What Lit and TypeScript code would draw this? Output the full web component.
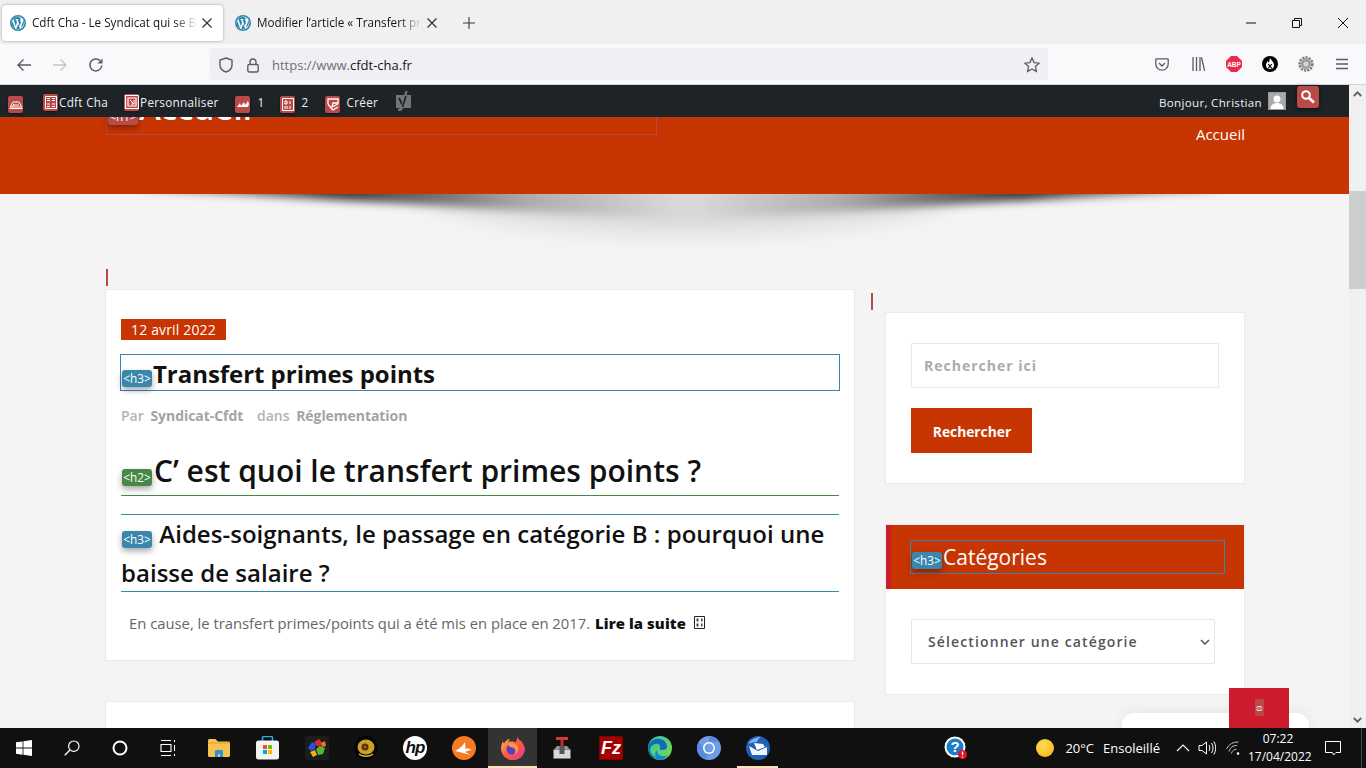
import { LitElement, html, css, svg } from "lit";
import { customElement } from "lit/decorators.js";

const wp = (size = 16) => html`<svg class="fav" width=${size} height=${size} viewBox="0 0 16 16">
  <circle cx="8" cy="8" r="8" fill="#2f86ad"/>
  <circle cx="8" cy="8" r="6.4" fill="#fff"/>
  <path d="M8 1.7a6.3 6.3 0 0 0-5.3 2.9h.9l2.1 6.6 1.3-3.9-.9-2.6h-.7v-.6h3v.6h-.7l2.1 6.5.9-3c.3-1 .2-1.8-.2-2.5-.4-.6-.6-1.4.1-1.9.2-.1.4-.2.5-.2A6.3 6.3 0 0 0 8 1.7zM2.1 5.5a6.3 6.3 0 0 0 3.1 8.1zM8.1 8.7l-1.8 5.2a6.3 6.3 0 0 0 3.8-.1zM13.1 4.6c.1 1.3-.2 2.2-.5 3.2l-1.8 5.3a6.3 6.3 0 0 0 2.3-8.5z" fill="#2f86ad"/>
</svg>`;

const ic = (w: number, h: number, body: unknown, extra = "") => html`<svg class="ic ${extra}" width=${w} height=${h} viewBox="0 0 ${w} ${h}" fill="none">${body}</svg>`;

const adminGlyphs: Record<string, unknown> = {
  car: svg`<path d="M2 11l3-5h6l3 5zM1.500 12.500h13M5 9h6M4 11l2-3" stroke="#fff" stroke-width="1"/>`,
  grid: svg`<path d="M2.500 2.500h11v12h-11zM4 4.500h3M9 4.500h3M4 6.500h3M9 6.500h3M4 10h3M9 10h3M4 12.500h3M9 12.500h3" stroke="#fff"/>`,
  frame: svg`<path d="M1.500 1.500h13v13h-13zM4 4h8v8H4z" stroke="#fff" stroke-width="1.200"/><path d="M6 6l4 4M10 6v4H7" stroke="#fff"/>`,
  wave: svg`<path d="M2 11l3-4 1 3 3-4 1 3 3-4 1 3-1 3H3z" fill="#fff"/>`,
  box: svg`<path d="M2.500 2.500h11v12h-11zM5 5h2v3H5zM10 5v3M5 10v3M7 10v3M10 10v3" stroke="#fff"/>`,
  plus: svg`<path d="M3 8V3h10v4H8l-1 4 6-3M3 8l3 4 2 2 5-3" stroke="#fff" stroke-width="1.300"/>`,
};
const adm = (k: string, low = true) => html`<span class="aic ${low ? "low" : ""}"><svg width="16" height="17" viewBox="0 0 16 17" fill="none">${adminGlyphs[k]}</svg></span>`;

const chevron = "data:image/svg+xml," + encodeURIComponent(`<svg xmlns="http://www.w3.org/2000/svg" width="10" height="6" viewBox="0 0 10 6"><path d="M1 1l4 4 4-4" fill="none" stroke="#555" stroke-width="1.500"/></svg>`);

@customElement("app-root")
export class AppRoot extends LitElement {
  static styles = css`
    :host { display: flex; flex-direction: column; width: 1366px; height: 768px; overflow: hidden; position: relative; font-family: "Open Sans", sans-serif; background: #f4f4f4; }
    svg { display: block; flex: none; }

    .tabbar { height: 44px; flex: none; background: #f0f0f0; display: flex; align-items: center; font-size: 11.7px; color: #15141a; padding-top: 1px; box-sizing: border-box; }
    .tab { height: 36px; width: 221px; box-sizing: border-box; display: flex; align-items: center; padding: 0 10px 0 8px; border-radius: 4px; flex: none; }
    .tab.on { margin-left: 2px; background: #fff; box-shadow: 0 0 3px rgba(0,0,0,.35); }
    .tab.off { margin-left: 4px; }
    .tab .t { margin: 0 0 2px 6px; flex: 1; white-space: nowrap; overflow: hidden; -webkit-mask-image: linear-gradient(to right, #000 86%, transparent 100%); mask-image: linear-gradient(to right, #000 86%, transparent 100%); }
    .tab .x { margin-left: 4px; }
    .newtab { margin-left: 15px; }
    .winbtns { margin-left: auto; display: flex; }
    .winbtns span { width: 46px; display: flex; justify-content: center; }

    .toolbar { height: 41px; flex: none; background: #f9f9fb; border-bottom: 1px solid #d4d4d6; box-sizing: border-box; display: flex; align-items: center; padding-left: 16px; position: relative; }
    .nav { width: 36px; display: flex; margin-top: 2px; }
    .url { position: absolute; left: 210px; width: 838px; height: 32px; top: 4px; background: #f0f0f4; border-radius: 4px; display: flex; align-items: center; box-sizing: border-box; padding: 2px 0 0 9px; font-size: 13px; color: #15141a; }
    .url .g { color: #6f6e75; }
    .url .s { margin-left: 14px; }
    .url .u { margin-left: 13px; }
    .url .st { margin-left: auto; margin-right: 8px; }
    .tools { margin-left: auto; display: flex; align-items: center; padding-right: 18px; }
    .tools > * { margin-left: 20px; }

    .wpbar { height: 32px; flex: none; background: #1d2327; color: #f0f0f1; font-size: 11.7px; letter-spacing: .3px; display: flex; align-items: center; position: relative; z-index: 3; margin-right: 17px; padding: 2px 0 0 8px; box-sizing: border-box; }
    .aic { width: 15px; height: 17px; background: #b94a48; border-radius: 2px; display: inline-block; flex: none; box-shadow: 0 1px 3px rgba(0,0,0,.4); overflow: hidden; }
    .aic.low { margin-top: 5px; }
    .ai { display: flex; align-items: center; }
    .ai span.l { line-height: 17px; }
    .yoast { margin: -3px 0 0 15px; }
    .bon { margin-left: auto; display: flex; align-items: center; margin-right: 63px; font-size: 11.6px; }
    .avatar { margin: -2px 0 0 6px; width: 18px; height: 18px; background: #aaa; border: 1px solid #9a9a9a; box-sizing: border-box; overflow: hidden; }
    .srch { position: absolute; left: 1297px; top: 1px; width: 22px; height: 22px; border-radius: 3px; background: #b94a48; box-shadow: 0 1px 4px rgba(0,0,0,.5); display: flex; align-items: center; justify-content: center; }

    .view { flex: 1; min-height: 0; display: flex; position: relative; }
    .page { flex: 1; min-width: 0; overflow: hidden; background: #f4f4f4; }
    .hdr { height: 77px; background: #c73502; display: flex; color: #fff; position: relative; box-sizing: border-box; padding: 0 104px 0 106px; justify-content: space-between; }
    .h1box { margin-top: -30px; width: 551px; height: 48px; box-sizing: border-box; border: 1px solid #b5484a; display: flex; align-items: flex-start; padding: 0 0 0 1px; font-size: 33px; line-height: 39px; font-weight: 600; white-space: nowrap; }
    .h1box .tag { margin-top: 20px; background: #b94a48; position: relative; z-index: 1; }
    .h1box b { font-weight: 600; margin-left: 1px; }
    .menu { font-size: 15px; line-height: 20px; margin-top: 7px; }
    .shadow { display: block; }

    .tag { display: inline-block; width: 30px; height: 17px; line-height: 17px; text-align: center; background: #3a87ad; color: #fff; font-size: 11.8px; font-weight: 400; border-radius: 3px; box-shadow: 0 3px 6px rgba(0,0,0,.35); font-family: "Open Sans", sans-serif; flex: none; vertical-align: middle; white-space: nowrap; }
    .tag.g { background: #468847; }

    .cols { display: grid; grid-template-columns: 750px 360px; column-gap: 30px; padding-left: 105px; }
    .tick { width: 2px; height: 17px; background: #b94a48; }
    .tick.a { margin: 0 0 3px 1px; }
    .side { padding-top: 24px; }
    .tick.b { margin: 0 0 2px -14px; }
    .card { background: #fff; border: 1px solid #eaeaea; box-sizing: border-box; }
    .art { height: 372px; padding: 29px 15px 0; }
    .art + .art { margin-top: 40px; height: 200px; }
    .date { display: inline-block; background: #c73502; color: #fff; height: 21px; width: 105px; font-size: 14px; line-height: 21px; text-align: center; letter-spacing: .15px; vertical-align: top; }
    .datew { height: 21px; }
    .title { margin: 14px -1px 0; height: 37px; border: 1px solid #3a87ad; box-sizing: border-box; display: flex; align-items: center; padding: 2px 0 0 1px; font-size: 24px; font-weight: 700; color: #111; line-height: 33px; white-space: nowrap; }
    .title .tag { margin: 10px 1px 0 0; }
    .title .tt { letter-spacing: -.04px; }
    .meta { margin-top: 15px; font-size: 14px; line-height: 20px; color: #b3b3b3; font-weight: 600; white-space: nowrap; padding-left: 0; }
    .meta b { color: #a3a3a3; font-weight: 700; margin-left: 3px; letter-spacing: -.05px; }
    .meta .d { margin-left: 10px; }
    .h2 { margin-top: 21px; height: 49px; border-bottom: 1px solid #468847; box-sizing: border-box; font-size: 30px; line-height: 46px; font-weight: 600; color: #111; display: flex; white-space: nowrap; padding-top: 1px; align-items: flex-start; }
    .h2 .tag { margin-top: 21px; margin-right: 2px; margin-left: 1px; }
    .h3 { margin-top: 18px; height: 78px; border-top: 1px solid #3a87ad; border-bottom: 1px solid #3a87ad; box-sizing: border-box; font-size: 24px; line-height: 39px; font-weight: 600; color: #111; letter-spacing: .03px; }
    .h3 .in { margin-top: -1px; }
    .h3 .tag { margin: -1px 1px 0 1px; position: relative; top: 3px; letter-spacing: 0; }
    .ex { margin: 21px 0 0 8px; font-size: 14.8px; line-height: 20px; color: #666; white-space: nowrap; display: flex; align-items: center; }
    .ex b { color: #111; font-weight: 800; margin-left: 5px; letter-spacing: .1px; }
    .ex svg { margin-left: 8px; margin-top: -1px; }

    .sc1 { height: 172px; padding: 30px 25px 0; }
    .inp { display: block; width: 308px; height: 45px; border: 1px solid #e9e9e9; background: #fff; box-sizing: border-box; padding: 0 12px; font: 700 14px "Open Sans", sans-serif; letter-spacing: 1px; color: #555; outline: none; border-radius: 0; }
    .inp::placeholder { color: #ababab; opacity: 1; }
    .btn { display: block; margin-top: 20px; width: 121px; height: 45px; background: #c73502; color: #fff; border: 0; font: 700 13.8px "Open Sans", sans-serif; padding: 2px 0 0 1px; }
    .sc2 { margin-top: 40px; height: 171px; }
    .chead { height: 64px; background: #c73502; border-left: 5px solid #cc1b2b; box-sizing: border-box; padding: 15px 0 0 19px; }
    .cbox { width: 315px; height: 34px; box-sizing: border-box; border: 1px solid #3a87ad; color: #fff; font-size: 21px; font-weight: 500; line-height: 33px; display: flex; padding-left: 1px; white-space: nowrap; }
    .cbox .tag { margin-top: 11px; margin-right: 1px; }
    .cbody { padding: 30px 25px 0; }
    .sel { display: block; width: 304px; height: 45px; border: 1px solid #e6e6e6; border-radius: 2px; box-sizing: border-box; padding: 0 12px 0 16px; font: 600 14px "Open Sans", sans-serif; letter-spacing: 1.12px; color: #555; outline: none; appearance: none; -webkit-appearance: none; background-color: #fff; background-repeat: no-repeat; background-position: 288px center; }

    .sb { width: 17px; flex: none; background: #f0f0f0; margin-top: -32px; position: relative; z-index: 4; display: flex; flex-direction: column; align-items: center; }
    .sb .up { height: 17px; margin-top: 0; display: flex; align-items: center; }
    .sb .thumb { width: 17px; height: 98px; background: #cdcdcd; margin-top: 89px; }
    .sb .dn { margin-top: auto; height: 17px; display: flex; align-items: center; }

    .chat { position: absolute; left: 1122px; top: 596px; width: 187px; height: 40px; background: #fff; border-radius: 12px 12px 0 0; box-shadow: 0 -2px 12px rgba(0,0,0,.06); }
    .redbox { position: absolute; left: 1229px; top: 571px; width: 60px; height: 40px; background: #cc1b2b; display: flex; justify-content: center; z-index: 1; }
    .redbox span { margin-top: 11px; width: 9px; height: 17px; background: #b94a48; border-radius: 2px; color: #fff; font-size: 9px; line-height: 17px; text-align: center; }

    .task { height: 40px; flex: none; background: #101010; color: #fff; display: flex; align-items: center; position: relative; z-index: 5; }
    .slot { width: 48px; height: 40px; display: flex; align-items: center; justify-content: center; flex: none; position: relative; }
    .apps { display: flex; margin-left: 2px; }
    .apps .slot { width: 49px; }
    .slot.active { background: #333; }
    .slot.active::after, .slot.open::after { content: ""; position: absolute; bottom: 0; left: 0; right: 0; height: 2px; background: #fbe0b8; }
    .slot.open::after { left: 4px; right: 4px; }
    .help { margin-left: 150px; }
    .tray { margin-left: auto; display: flex; align-items: center; font-size: 13px; color: #fff; }
    .sun { width: 18px; height: 18px; border-radius: 50%; background: radial-gradient(circle at 40% 35%, #ffdd55, #fbb010); }
    .clock { font-size: 12px; line-height: 18px; text-align: center; width: 60px; margin-left: 8px; }
    .temp { margin-left: 11px; }
    .ens { margin-left: 9px; }
    .tray svg.caret { margin-left: 16px; }
    .tray svg.spk { margin-left: 8px; }
    .tray svg.wifi { margin-left: 10px; }
    .tray svg.note { margin-left: 17px; margin-right: 25px; }
    .edge { position: absolute; right: 4px; top: 0; bottom: 0; width: 1px; background: #4a4a4a; }
  `;

  render() {
    const close = ic(12, 12, svg`<path d="M1.500 1.500l9 9M10.500 1.500l-9 9" stroke="#2b2a33" stroke-width="1.100"/>`, "x");
    return html`
      <div class="tabbar">
        <div class="tab on">${wp()}<span class="t">Cdft Cha - Le Syndicat qui se Bouge</span>${close}</div>
        <div class="tab off">${wp()}<span class="t">Modifier l’article « Transfert primes points</span>${close}</div>
        <span class="newtab">${ic(12, 12, svg`<path d="M6 0v12M0 6h12" stroke="#3b3a42" stroke-width="1.100"/>`)}</span>
        <div class="winbtns">
          <span>${ic(10, 10, svg`<path d="M0 5h10" stroke="#111"/>`)}</span>
          <span>${ic(10, 10, svg`<path d="M.5 2.500h7v7h-7zM2.500 2.500v-2h7v7h-2" stroke="#111"/>`)}</span>
          <span>${ic(10, 10, svg`<path d="M0 0l10 10M10 0L0 10" stroke="#111"/>`)}</span>
        </div>
      </div>
      <div class="toolbar">
        <span class="nav">${ic(16, 16, svg`<path d="M15 8H2M7.500 2.500L2 8l5.500 5.500" stroke="#5b5b66" stroke-width="1.400"/>`)}</span>
        <span class="nav">${ic(16, 16, svg`<path d="M1 8h13M8.500 2.500L14 8l-5.500 5.500" stroke="#c4c4c8" stroke-width="1.400"/>`)}</span>
        <span class="nav">${ic(16, 16, svg`<path d="M13.800 8.500A6 6 0 1 1 12 3.600" stroke="#5b5b66" stroke-width="1.500"/><path d="M14.500 1.500v5h-5z" fill="#5b5b66"/>`)}</span>
        <div class="url">
          ${ic(14, 16, svg`<path d="M7 1l6 2v5c0 3.500-3 6-6 7-3-1-6-3.500-6-7V3z" stroke="#5b5b66" stroke-width="1.400"/>`)}
          <span class="s">${ic(12, 15, svg`<rect x=".8" y="6.500" width="10.400" height="7.500" rx="1.500" stroke="#5b5b66" stroke-width="1.400"/><path d="M3 6.500V4a3 3 0 0 1 6 0v2.500" stroke="#5b5b66" stroke-width="1.400"/>`)}</span>
          <span class="u"><span class="g">https://www.</span>cfdt-cha.fr</span>
          <span class="st">${ic(16, 16, svg`<path d="M8 1l2.100 4.600 5 .6-3.700 3.400 1 4.900L8 12l-4.400 2.500 1-4.900L.9 6.200l5-.6z" stroke="#5b5b66" stroke-width="1.300"/>`)}</span>
        </div>
        <div class="tools">
          ${ic(14, 13, svg`<path d="M1.500.8h11c.4 0 .7.3.7.7v4.500c0 3.300-2.800 6.200-6.200 6.200S.8 9.300.8 6V1.500c0-.4.300-.7.700-.7z" stroke="#5b5b66" stroke-width="1.300"/><path d="M4 5l3 3 3-3" stroke="#5b5b66" stroke-width="1.400"/>`)}
          <span style="margin-left:23px">${ic(13, 14, svg`<path d="M1 0v14M4.500 0v14M8 0v14M9.500 .5L12.700 14" stroke="#5b5b66" stroke-width="1.300"/>`)}</span>
          <span style="margin-left:21px">${ic(16, 16, svg`<path d="M5 0h6l5 5v6l-5 5H5l-5-5V5z" fill="#ee2a4b"/><text x="8" y="10.500" font-size="6.500" font-weight="800" text-anchor="middle" fill="#fff" font-family="Liberation Sans">ABP</text>`)}</span>
          <span style="margin-left:20px">${ic(16, 16, svg`<circle cx="8" cy="8" r="8" fill="#000"/><path d="M8 2c1 2 4 4 4 7a4 4 0 0 1-8 0c0-2 1-3 2-4 0 1 .5 1.500 1 1.500C7.500 5 7.500 3.500 8 2z" fill="#fff"/><path d="M6.200 8l3.600 4.500M9.800 8l-3.600 4.500" stroke="#000" stroke-width="1.200"/>`)}</span>
          <span style="margin-left:20px">${ic(16, 16, svg`<circle cx="8" cy="8" r="6.400" fill="none" stroke="#7d7d7d" stroke-width="2.600" stroke-dasharray="2.200 1"/><circle cx="8" cy="8" r="5" fill="#999"/><circle cx="8" cy="8" r="2.600" fill="#d6d6d6"/>`)}</span>
          <span style="margin-left:22px">${ic(12, 12, svg`<path d="M0 1.500h12M0 6h12M0 10.500h12" stroke="#5b5b66" stroke-width="1.300"/>`)}</span>
        </div>
      </div>
      <div class="wpbar">
        ${adm("car")}
        <span class="ai" style="margin-left:20px">${adm("grid", false)}<span class="l" style="margin-left:1px">Cdft Cha</span></span>
        <span class="ai" style="margin-left:16px">${adm("frame", false)}<span class="l" style="margin-left:1px">Personnaliser</span></span>
        <span class="ai" style="margin-left:16px">${adm("wave")}<span class="l" style="margin-left:8px">1</span></span>
        <span class="ai" style="margin-left:15px">${adm("box")}<span class="l" style="margin-left:7px">2</span></span>
        <span class="ai" style="margin-left:16px">${adm("plus")}<span class="l" style="margin-left:7px">Créer</span></span>
        <span class="yoast">${ic(18, 20, svg`<path d="M3 4h15v13H9l-2 0H3z" fill="#70757a"/><path d="M6 7l3.500 7" stroke="#1d2327" stroke-width="1.800"/><path d="M13.500 0L9 17c-.5 1.500-2 2-4 2" stroke="#70757a" stroke-width="2.400"/><path d="M13 5l-3.500 11" stroke="#1d2327" stroke-width="1.600"/>`)}</span>
        <div class="bon">Bonjour, Christian
          <span class="avatar">${ic(16, 16, svg`<circle cx="8" cy="6" r="3.500" fill="#fff"/><path d="M1.500 16c0-4 3-6 6.500-6s6.500 2 6.500 6z" fill="#fff"/>`)}</span>
        </div>
        <span class="srch">${ic(16, 16, svg`<circle cx="6" cy="6" r="3.800" stroke="#fff" stroke-width="2"/><path d="M9 9l5 4.500" stroke="#fff" stroke-width="2.800"/>`)}</span>
      </div>
      <div class="view">
        <div class="page">
          <div class="hdr">
            <div class="h1box"><span class="tag">&lt;h1&gt;</span><b>Accueil</b></div>
            <div class="menu">Accueil</div>
          </div>
          <svg class="shadow" width="1349" height="75" viewBox="0 0 1349 75">
            <defs>
              <filter id="b1" x="-10%" y="-60%" width="120%" height="220%"><feGaussianBlur stdDeviation="14 4"/></filter>
              <filter id="b2" x="-10%" y="-50%" width="120%" height="200%"><feGaussianBlur stdDeviation="10"/></filter>
              <linearGradient id="gl" gradientUnits="userSpaceOnUse" x1="150" x2="687" y1="0" y2="0"><stop offset="0" stop-color="#000" stop-opacity=".3"/><stop offset=".36" stop-color="#000" stop-opacity=".78"/><stop offset=".7" stop-color="#000" stop-opacity=".22"/><stop offset="1" stop-color="#000" stop-opacity="0"/></linearGradient>
              <linearGradient id="gr" gradientUnits="userSpaceOnUse" x1="1210" x2="687" y1="0" y2="0"><stop offset="0" stop-color="#000" stop-opacity=".3"/><stop offset=".36" stop-color="#000" stop-opacity=".78"/><stop offset=".7" stop-color="#000" stop-opacity=".22"/><stop offset="1" stop-color="#000" stop-opacity="0"/></linearGradient>
              <clipPath id="cl"><rect width="1349" height="75"/></clipPath>
            </defs>
            <g clip-path="url(#cl)">
              <path d="M400 -10H980C950 28 790 40 687 40C590 40 430 28 400 -10Z" fill="#000" fill-opacity=".1" filter="url(#b2)"/>
              <path d="M150 -3C280 1 460 14 687 26V-12H150Z" fill="url(#gl)" filter="url(#b1)"/>
              <path d="M1210 -3C1090 1 920 14 687 26V-12H1210Z" fill="url(#gr)" filter="url(#b1)"/>
            </g>
          </svg>
          <div class="cols">
            <div>
              <div class="tick a"></div>
              <div class="card art">
                <div class="datew"><span class="date">12 avril 2022</span></div>
                <div class="title"><span class="tag">&lt;h3&gt;</span><span class="tt">Transfert primes points</span></div>
                <div class="meta">Par <b>Syndicat-Cfdt</b> <span class="d">dans</span> <b>Réglementation</b></div>
                <div class="h2"><span class="tag g">&lt;h2&gt;</span>C’ est quoi le transfert primes points ?</div>
                <div class="h3"><div class="in"><span class="tag">&lt;h3&gt;</span> Aides-soignants, le passage en catégorie B : pourquoi une baisse de salaire ?</div></div>
                <div class="ex">En cause, le transfert primes/points qui a été mis en place en 2017.<b>Lire la suite</b>
                  ${ic(11, 13, svg`<path d="M.5 .5h10v12H.5z" stroke="#222"/><path d="M2.500 2.500h2v3h-2zM7 2.500h1.500v3H7zM2.500 7.500h2v3h-2zM7 7.500h1.500v3H7z" fill="#444"/>`)}
                </div>
              </div>
              <div class="card art"></div>
            </div>
            <div class="side">
              <div class="tick b"></div>
              <div class="card sc1">
                <input class="inp" placeholder="Rechercher ici" />
                <button class="btn">Rechercher</button>
              </div>
              <div class="card sc2">
                <div class="chead"><div class="cbox"><span class="tag">&lt;h3&gt;</span>Catégories</div></div>
                <div class="cbody"><select class="sel" style="background-image:url('${chevron}')"><option>Sélectionner une catégorie</option></select></div>
              </div>
            </div>
          </div>
        </div>
        <div class="sb">
          <span class="up">${ic(9, 6, svg`<path d="M.8 5L4.500 1.300 8.200 5" stroke="#606060" stroke-width="1.800"/>`)}</span>
          <div class="thumb"></div>
          <span class="dn">${ic(9, 6, svg`<path d="M.8 1L4.500 4.700 8.200 1" stroke="#606060" stroke-width="1.800"/>`)}</span>
        </div>
        <div class="chat"></div>
        <div class="redbox"><span>ග</span></div>
      </div>
      <div class="task">
        <span class="slot">${ic(16, 16, svg`<path d="M0 2.300l6.600-.9v6.200H0zM7.400 1.300L16 0v7.600H7.400zM0 8.400h6.600v6.300L0 13.700zM7.400 8.400H16V16l-8.600-1.200z" fill="#fff"/>`)}</span>
        <span class="slot">${ic(16, 16, svg`<circle cx="9.800" cy="6.200" r="5.200" stroke="#fff" stroke-width="1.200"/><path d="M6 10L.7 15.300" stroke="#fff" stroke-width="1.300"/>`)}</span>
        <span class="slot">${ic(16, 16, svg`<circle cx="8" cy="8" r="6.500" stroke="#fff" stroke-width="2"/>`)}</span>
        <span class="slot">${ic(16, 16, svg`<path d="M1 .5h10M1 15.500h10M1 4.500h10v7H1zM14.500 0v2M14.500 5v6M14.500 14v2" stroke="#fff" stroke-width="1.100"/>`)}</span>
        <div class="apps">
          <span class="slot">${ic(22, 18, svg`<path d="M0 1.500C0 .7.700 0 1.500 0h6L10 2.500h10.500c.8 0 1.500.7 1.500 1.500v12.500c0 .8-.7 1.500-1.500 1.500h-19C.7 18 0 17.300 0 16.500z" fill="#f5c453"/><path d="M0 4h22" stroke="#d99f2b"/><path d="M7 18v-5.500c0-.8.700-1.500 1.500-1.500h5c.8 0 1.500.7 1.500 1.500V18h-3v-3h-2v3z" fill="#2f8fd8"/>`)}</span>
          <span class="slot">${ic(23, 24, svg`<path d="M6.500 5V2c0-1 .7-1.500 1.500-1.500h7c.8 0 1.500.5 1.500 1.500v3" stroke="#29aee6" stroke-width="1.500"/><rect y="4.500" width="23" height="19" rx="2.500" fill="#f3f3f3"/><rect x="7" y="9" width="4" height="4" fill="#f25022"/><rect x="12" y="9" width="4" height="4" fill="#7fba00"/><rect x="7" y="14" width="4" height="4" fill="#00a4ef"/><rect x="12" y="14" width="4" height="4" fill="#ffb900"/>`)}</span>
          <span class="slot">${ic(24, 24, svg`<rect width="24" height="24" rx="3" fill="#1c1c1c"/><path d="M3 12l4-6 4 2-1 5-4 2z" fill="#2a52d6"/><path d="M9 6l5-3 4 5-5 3z" fill="#d62c2c"/><path d="M11 13l4-3 5 2-2 6-5 1z" fill="#57b833"/><path d="M5 16l5-2 2 5-4 2z" fill="#e8b41e"/><path d="M16 7l4-2 1 5-4 1z" fill="#e87a1e"/>`)}</span>
          <span class="slot">${ic(24, 24, svg`<circle cx="12" cy="12" r="12" fill="#050505"/><ellipse cx="12" cy="11" rx="8.500" ry="7.500" fill="#c9a227"/><circle cx="11" cy="11" r="3.500" fill="#4a3410"/><circle cx="11" cy="11" r="1.500" fill="#e23a2e"/><path d="M5 18c3 3 11 3 14 0" stroke="#d4b348" stroke-width="1.500"/>`)}</span>
          <span class="slot">${ic(24, 24, svg`<circle cx="12" cy="12" r="12" fill="#fff"/><text x="12" y="17" font-size="17" font-weight="700" font-style="italic" text-anchor="middle" fill="#111" font-family="Liberation Sans" letter-spacing="-1">hp</text>`)}</span>
          <span class="slot">${ic(24, 24, svg`<circle cx="12" cy="12" r="12" fill="#f47b20"/><path d="M3 15c4-2 8-5 10-9 0 3 1 5 0 7 3-1 5 0 7 1-3 0-5 1-7 2 2 1 4 2 5 3-4-1-9-3-15-4z" fill="#fff"/>`)}</span>
          <span class="slot active">${ic(24, 24, svg`<defs><linearGradient id="ff" x1="0" y1="0" x2="1" y2="1"><stop offset="0" stop-color="#ffbd4f"/><stop offset=".5" stop-color="#ff5a3c"/><stop offset="1" stop-color="#d53a9d"/></linearGradient></defs><path d="M16 0c.5 3 3 4 5 6 2 3 3 6 3 7a12 12 0 1 1-23.500-4C1 7 1.500 6 2 5c0 1 .5 2 1 2.500C4 5 7 3 9 3c-1 1-1.500 2-1.500 3 2-1 5-1 7 .5C16 4 16.500 2 16 0z" fill="url(#ff)"/><circle cx="11" cy="13" r="5.500" fill="#5a3fc0"/><path d="M7 8c3-2 8-1 10 3 1 3-1 7-5 8 3-2 3-5 1-7-2-1-5 0-6-4z" fill="#ff9640"/>`)}</span>
          <span class="slot">${ic(20, 24, svg`<path d="M4 2.500h12" stroke="#d73a32" stroke-width="3"/><rect x="8.500" y="3" width="3" height="10" fill="#b33"/><path d="M1.500 13.500h17v9h-17z" fill="#d8d8d8"/><path d="M5 10h10l3 3.500H2z" fill="#9a9a9a"/><rect x="7.500" y="10" width="5" height="8" fill="#555"/>`)}</span>
          <span class="slot">${ic(24, 24, svg`<rect width="24" height="24" fill="#a30000"/><rect x=".5" y=".5" width="23" height="23" fill="none" stroke="#5a0000" stroke-dasharray="1.500 1.500"/><text x="12" y="18" font-size="18" font-weight="700" font-style="italic" text-anchor="middle" fill="#fff" font-family="Liberation Sans">Fz</text>`)}</span>
          <span class="slot">${ic(24, 24, svg`<defs><linearGradient id="eg" x1="0" y1="0" x2="1" y2="1"><stop offset="0" stop-color="#2fc5a5"/><stop offset="1" stop-color="#7fd84a"/></linearGradient></defs><circle cx="12" cy="12" r="12" fill="url(#eg)"/><path d="M0 12C1 5 7 2 12 3c5 1 7 4 7 8 0 2-2 3-5 3-2 0-3-1-2-2 1-3-2-5-5-4-4 1-6 5-4 9 1 2 5 6 10 6-7 1-13-4-13-11z" fill="#0f6cbd"/><path d="M9 14c0 5 5 8 11 5-2 3-5 5-8 5-4 0-7-5-3-10z" fill="#1488d8"/>`)}</span>
          <span class="slot">${ic(24, 24, svg`<circle cx="12" cy="12" r="12" fill="#6f9ee8"/><path d="M12 0a12 12 0 0 1 10.400 6H12zM1.600 6A12 12 0 0 0 8 23.300L12 18z" fill="#5b8be0"/><circle cx="12" cy="12" r="6" fill="#fff"/><circle cx="12" cy="12" r="4.500" fill="#6f9ee8"/>`)}</span>
          <span class="slot open">${ic(24, 24, svg`<circle cx="12" cy="12" r="12" fill="#1f5fb8"/><path d="M2 8c3-5 8-7 13-7-3 2-4 4-4 5-4 0-7 1-9 2z" fill="#7fb2ee"/><path d="M3 10l9 5 9-4v8H6z" fill="#f4f4f4"/><path d="M8 7l9 1 2 3-8 3z" fill="#fff"/>`)}</span>
        </div>
        <span class="slot help">${ic(24, 24, svg`<circle cx="11" cy="11" r="10.500" fill="#fff"/><circle cx="11" cy="11" r="8.500" fill="#1c7fc4"/><text x="11" y="16" font-size="15" font-weight="700" text-anchor="middle" fill="#fff" font-family="Liberation Sans">?</text><circle cx="18.500" cy="18.500" r="4.500" fill="#e81123"/><path d="M18.500 15.500v3.500M18.500 20.200v1.300" stroke="#fff" stroke-width="1.300"/>`)}</span>
        <div class="tray">
          <span class="sun"></span>
          <span class="temp">20°C</span><span class="ens">Ensoleillé</span>
          ${ic(14, 8, svg`<path d="M1 7l6-6 6 6" stroke="#fff" stroke-width="1.100"/>`, "caret")}
          ${ic(18, 16, svg`<path d="M1 5.500h3L8.500 2v12L4 10.500H1zM11 5c1 1.500 1 4.500 0 6M13.500 3c2 3 2 7 0 10M15.800 1.500c2.500 4 2.500 9 0 13" stroke="#fff"/>`, "spk")}
          ${ic(14, 14, svg`<path d="M.5 8a12 12 0 0 1 12-7M3 10.500a8 8 0 0 1 8-6M5.500 12.500a4.500 4.500 0 0 1 5-4" stroke="#bdbdbd" fill="none"/><circle cx="12" cy="12.500" r="1.300" fill="#fff"/>`, "wifi")}
          <div class="clock">07:22<br />17/04/2022</div>
          ${ic(16, 16, svg`<path d="M.5 1.500h15v11H11l-2.500 2.500-1-2.500h-7z" stroke="#fff"/>`, "note")}
        </div>
        <span class="edge"></span>
      </div>
    `;
  }
}
